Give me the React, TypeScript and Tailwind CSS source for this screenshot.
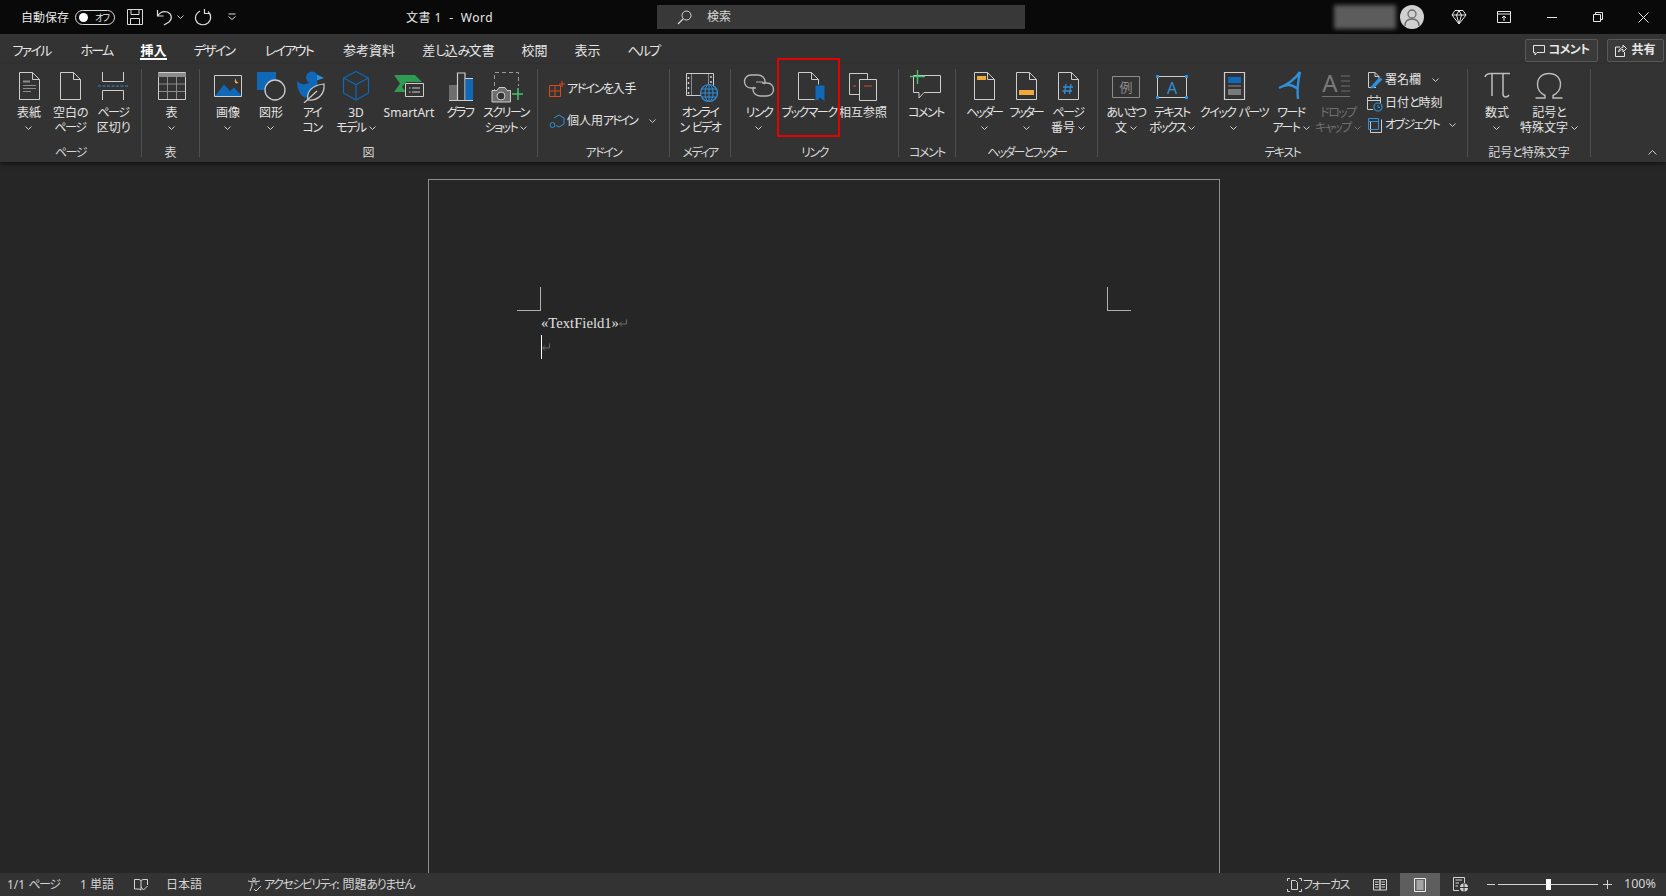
import type { ReactNode } from "react";

const S = "#cdcdcd";
const BLUE = "#0f68b8";
const LBLUE = "#2f8fd8";
const ORANGE = "#f2a93b";
const GREEN = "#46c46c";
const BG = "#333333";

// Meiryo UI のかなは細いので、かなの部分だけ字間を詰める
function Jp({ text, tight = "tracking-[-1.5px]" }: { text: string; tight?: string }) {
  const parts = text.split(/([\u3040-\u30ff]+)/);
  return (
    <>
      {parts.map((part, i) =>
        i % 2 === 1 ? (
          <span key={i} className={tight}>
            {part}
          </span>
        ) : (
          part
        ),
      )}
    </>
  );
}

function Ico({ children, w = 36, h = 34 }: { children: ReactNode; w?: number; h?: number }) {
  return (
    <svg width={w} height={h} viewBox={`0 0 ${w} ${h}`} fill="none" stroke={S} strokeWidth="1">
      {children}
    </svg>
  );
}

const docPath = "M8.5 3.5H21.5L28.5 10.5V30.5H8.5ZM21.5 3.5V10.5H28.5";

const icons: Record<string, ReactNode> = {
  cover: (
    <Ico>
      <path d={docPath} />
      <path d="M12 12.5H19" stroke="#8c8c8c" strokeWidth="2" />
      <path d="M12 16.5H25M12 19.5H25M12 22.5H20" stroke="#8c8c8c" />
    </Ico>
  ),
  blank: (
    <Ico>
      <path d={docPath} />
    </Ico>
  ),
  pagebreak: (
    <Ico>
      <path d="M7.5 3V12.5H28.5V3M7.5 31V21.5H28.5V31" />
      <path d="M3 17H33" stroke={LBLUE} strokeDasharray="3 1.5" />
    </Ico>
  ),
  table: (
    <Ico>
      <path d="M4.5 3.5H31.5V30.5H4.5Z" />
      <path d="M4 4H32V8H4Z" fill="#8c8c8c" stroke="none" />
      <path d="M13.5 8V30M22.5 8V30M5 15H31M5 22.5H31" stroke="#8c8c8c" />
    </Ico>
  ),
  picture: (
    <Ico>
      <path d="M4.5 6.5H31.5V27.5H4.5Z" />
      <path d="M5 27L14 15.5L20 22L24 18.5L31 26V27Z" fill={BLUE} stroke="none" />
      <path d="M26 9.5A3 3 0 0 0 26 14.5A3 3 0 0 0 28.5 13.5A3 3 0 0 1 26 9.5Z" fill={ORANGE} stroke="none" />
    </Ico>
  ),
  shapes: (
    <Ico>
      <path d="M4 3H23V21H4Z" fill={BLUE} stroke="none" />
      <circle cx="22" cy="21" r="10" fill={BG} stroke={S} strokeWidth="1.3" />
    </Ico>
  ),
  icons: (
    <Ico>
      <circle cx="18" cy="8.5" r="6" fill={BLUE} stroke="none" />
      <path d="M23 5.5L30 9L23 11.5Z" fill={LBLUE} stroke="none" />
      <path d="M3 12C7 15.5 11 16 14 14L23 12C25 18 22 20 18 21L12 29C6 27 3 20 3 12Z" fill={BLUE} stroke="none" />
      <path d="M14 31C12 23 18 16 30 15C31 24 25 32 14 31Z" fill={BG} stroke={S} strokeWidth="1.2" />
      <path d="M10 34L23 22" stroke={S} strokeWidth="1.2" />
    </Ico>
  ),
  model: (
    <Ico>
      <path d="M18 2.5L30.5 9V24L18 31L5.5 24V9ZM5.5 9L18 15.5L30.5 9M18 15.5V31" stroke={BLUE} strokeWidth="1.2" />
    </Ico>
  ),
  smartart: (
    <Ico>
      <path d="M3 6H24L31 13H15L11 18L15 23H14L3 23L9 14.5Z" fill="#2f9a52" stroke="none" />
      <path d="M14.5 14.5H32.5V27.5H14.5Z" fill={BG} />
      <path d="M18 19H19.5M21 19H29M18 23H19.5M21 23H29" />
    </Ico>
  ),
  chart: (
    <Ico>
      <path d="M7 16H15V32H7Z" fill="#6e6e6e" stroke="none" />
      <path d="M15.5 4H23V31.5H15.5Z" stroke={S} strokeWidth="1.2" />
      <path d="M23.5 9H31V32H23.5Z" fill={BLUE} stroke="none" />
      <path d="M23 9.5H31M7 31.5H31" stroke={S} />
    </Ico>
  ),
  screenshot: (
    <Ico>
      <path d="M6.5 24V3.5H30.5V17" strokeDasharray="4 3" stroke="#9c9c9c" />
      <path d="M4 21.5H9L11 18.5H17L19 21.5H22.5V33H4Z" fill="#6e6e6e" stroke={S} />
      <circle cx="13" cy="27" r="4" fill={BG} stroke={S} />
      <path d="M30 19V31M24 25H35" stroke={GREEN} strokeWidth="1.5" />
    </Ico>
  ),
  video: (
    <Ico>
      <path d="M4.5 4.5H31.5V26.5H4.5Z" />
      <path d="M9.5 5V26M26.5 5V15" stroke="#8c8c8c" />
      <path d="M6.5 8V10M6.5 13V15M6.5 18V20M6.5 23V25M29 7V9M29 12V14" stroke={S} strokeWidth="1.5" />
      <circle cx="27" cy="24" r="8.5" fill={BG} stroke={LBLUE} strokeWidth="1.2" />
      <path d="M18.5 24H35.5M19.5 20H34.5M19.5 28H34.5M27 15.5V32.5" stroke={LBLUE} />
      <ellipse cx="27" cy="24" rx="4" ry="8.5" stroke={LBLUE} />
    </Ico>
  ),
  link: (
    <Ico>
      <path d="M15 19H10C5.5 19 3.5 15.5 3.5 12.5C3.5 9 6 6 10 6H17C21 6 24 9 24 12.5C24 13.5 23.5 14.5 23 15" stroke="#b5b5b5" strokeWidth="1.4" />
      <path d="M21 14H26C30.5 14 32.5 17.5 32.5 20.5C32.5 24 30 27 26 27H19C15 27 12 24 12 20.5C12 19.5 12.5 18.5 13 18" stroke="#b5b5b5" strokeWidth="1.4" />
      <path d="M15 13H22" stroke="#b5b5b5" />
    </Ico>
  ),
  bookmark: (
    <Ico>
      <path d="M7.5 3.5H20.5L27.5 10.5V30.5H7.5ZM20.5 3.5V10.5H27.5" />
      <path d="M24 16H34V33L29 29L24 33Z" fill={BLUE} stroke={BG} />
    </Ico>
  ),
  crossref: (
    <Ico>
      <path d="M4.5 4.5H22.5V25.5H4.5Z" />
      <path d="M14.5 10.5H31.5V31.5H14.5Z" fill={BG} />
      <path d="M8 17H11M19 17H27" stroke="#e0453a" strokeWidth="1.2" />
    </Ico>
  ),
  comment: (
    <Ico>
      <path d="M5.5 6.5H32.5V23.5H16L11 29V23.5H5.5Z" />
      <path d="M9.5 1V15M2 7.5H17" stroke={GREEN} strokeWidth="1.4" />
    </Ico>
  ),
  header: (
    <Ico>
      <path d={docPath} />
      <path d="M11 7H20V11H11Z" fill={ORANGE} stroke="none" />
    </Ico>
  ),
  footer: (
    <Ico>
      <path d={docPath} />
      <path d="M11 21H26V26H11Z" fill={ORANGE} stroke="none" />
    </Ico>
  ),
  pagenum: (
    <Ico>
      <path d={docPath} />
      <path d="M16 15L14.5 25M21 15L19.5 25M13 18H23M12.5 22H22" stroke={LBLUE} strokeWidth="1.3" />
    </Ico>
  ),
  greeting: (
    <Ico>
      <path d="M4.5 7.5H31.5V28.5H4.5Z" stroke="#8c8c8c" />
      <text x="18" y="23" textAnchor="middle" fontSize="13" fill="#8c8c8c" stroke="none">
        例
      </text>
    </Ico>
  ),
  textbox: (
    <Ico>
      <path d="M3.5 7.5H32.5V28.5H3.5Z" />
      <path d="M2 6H5V9H2ZM31 6H34V9H31ZM2 27H5V30H2ZM31 27H34V30H31Z" fill={LBLUE} stroke="none" />
      <text x="18" y="24.5" textAnchor="middle" fontSize="16" fill={LBLUE} stroke="none">
        A
      </text>
    </Ico>
  ),
  parts: (
    <Ico>
      <path d="M8.5 3.5H28.5V30.5H8.5Z" strokeWidth="1.2" />
      <path d="M12 8H25V14H12Z" fill={BLUE} stroke="none" />
      <path d="M12 17H25" stroke="#8c8c8c" />
      <path d="M12 20H25V26H12Z" fill="#7a7a7a" stroke="none" />
    </Ico>
  ),
  wordart: (
    <Ico>
      <path d="M27 3C22 10 14 16 6 19M27 3C25 12 24 22 25 30M11 17C15 15 20 16 25 20" stroke={LBLUE} strokeWidth="2.4" />
    </Ico>
  ),
  dropcap: (
    <Ico>
      <text x="10" y="23" textAnchor="middle" fontSize="24" fill="#7a7a7a" stroke="none">
        A
      </text>
      <path d="M21 7H30M21 12H30M21 17H30M21 22H30M2 27.5H30" stroke="#6f6f6f" />
    </Ico>
  ),
  pi: (
    <Ico>
      <path d="M6 8C7 5 9 4.5 12 4.5H31" stroke="#bdbdbd" strokeWidth="1.5" />
      <path d="M13 5V27M24 5V25C24 27 25 28 27 28C28 28 29 27.5 30 26" stroke="#bdbdbd" strokeWidth="1.5" />
    </Ico>
  ),
  omega: (
    <Ico>
      <path
        d="M4.5 29H14V26.5C9 24 6.5 20.5 6.5 15.5C6.5 9 11 4.5 18 4.5C25 4.5 29.5 9 29.5 15.5C29.5 20.5 27 24 22 26.5V29H31.5"
        stroke="#bdbdbd"
        strokeWidth="1.4"
      />
    </Ico>
  ),
};

function Chevron({ color = "#cfcfcf" }: { color?: string }) {
  return (
    <svg width="7" height="4" viewBox="0 0 7 4" fill="none" stroke={color} className="shrink-0">
      <path d="M0.5 0.5L3.5 3.5L6.5 0.5" />
    </svg>
  );
}

type Btn = {
  w: string;
  icon: string;
  lines: string[];
  chevron?: "below" | "inline";
  dim?: boolean;
  tight?: string;
};

function RibbonButton({ btn }: { btn: Btn }) {
  const color = btn.dim ? "#707070" : "#e4e4e4";
  return (
    <div className={`${btn.w} flex shrink-0 flex-col items-center`}>
      <div className="flex h-[34px] w-full items-center justify-center">{icons[btn.icon]}</div>
      <div className="mt-[2px] flex flex-col items-center text-[12px] leading-[15px]" style={{ color }}>
        {btn.lines.map((line, i) => (
          <div key={line} className="flex items-center gap-[3px] whitespace-nowrap">
            <span>
              <Jp text={line} tight={btn.tight} />
            </span>
            {btn.chevron === "inline" && i === btn.lines.length - 1 && (
              <Chevron color={btn.dim ? "#707070" : "#cfcfcf"} />
            )}
          </div>
        ))}
        {btn.chevron === "below" && (
          <div className="flex h-[15px] items-center">
            <Chevron />
          </div>
        )}
      </div>
    </div>
  );
}

function Group({
  w,
  pad,
  title,
  tight,
  children,
}: {
  w: string;
  pad: string;
  title: string;
  tight?: string;
  children: ReactNode;
}) {
  return (
    <div className={`${w} flex h-[88px] shrink-0 flex-col border-r border-[#4f4f4f]`}>
      <div className={`${pad} flex flex-1 items-start`}>{children}</div>
      <div className="mb-[-3px] h-[14px] text-center text-[12px] leading-[14px] text-[#d8d8d8]">
        <Jp text={title} tight={tight} />
      </div>
    </div>
  );
}

const tabs = [
  { label: "ファイル", w: "w-[63px]" },
  { label: "ホーム", w: "w-[67px]" },
  { label: "挿入", w: "w-[47px]", active: true },
  { label: "デザイン", w: "w-[74px]" },
  { label: "レイアウト", w: "w-[76px]" },
  { label: "参考資料", w: "w-[84px]" },
  { label: "差し込み文書", w: "w-[95px]" },
  { label: "校閲", w: "w-[57px]" },
  { label: "表示", w: "w-[49px]" },
  { label: "ヘルプ", w: "w-[63px]" },
];

function TitleBar() {
  return (
    <header className="flex h-[34px] shrink-0 items-center bg-[#090909] text-[12px] text-[#e8e8e8]">
      <div className="flex w-[657px] shrink-0 items-center">
        <span className="ml-[21px] w-[54px] pt-[2px]">自動保存</span>
        <div className="flex h-[15px] w-[40px] items-center justify-between rounded-full border border-[#dcdcdc] pl-[3px] pr-[5px]">
          <span className="h-[9px] w-[9px] rounded-full bg-white" />
          <span className="text-[9px] leading-none tracking-[-1px]">オフ</span>
        </div>
        <svg width="18" height="18" viewBox="0 0 18 18" fill="none" stroke="#dcdcdc" className="ml-[11px]">
          <path d="M1.5 1.5H16.5V16.5H1.5ZM5 1.5V6.5H13V1.5M4.5 16.5V10.5H13.5V16.5" />
        </svg>
        <svg width="18" height="18" viewBox="0 0 18 18" fill="none" stroke="#dcdcdc" strokeWidth="1.2" className="ml-[12px]">
          <path d="M1.5 2V8H7.5M1.5 8C4 4 8 3 11.5 4C16 6 16.5 11 13 14L8 17" />
        </svg>
        <span className="ml-[3px]">
          <Chevron />
        </span>
        <svg width="19" height="18" viewBox="0 0 19 18" fill="none" stroke="#dcdcdc" strokeWidth="1.2" className="ml-[10px]">
          <path d="M10.5 1V5.5H15M6 3C2 5 0.5 9 2 12.5C4 17 10 18 14 15C18 11.5 17 6 14 3.5" />
        </svg>
        <svg width="8" height="8" viewBox="0 0 8 8" fill="none" stroke="#dcdcdc" className="ml-[15px]">
          <path d="M0.5 1H7.5M0.5 3.5L4 6.5L7.5 3.5" />
        </svg>
        <span className="ml-[170px] whitespace-nowrap pt-[2px] tracking-[0.5px]">文書 1&nbsp; -&nbsp; Word</span>
      </div>
      <div className="flex h-[24px] w-[368px] shrink-0 items-center bg-[#383838] pl-[20px] text-[#d8d8d8]">
        <svg width="15" height="15" viewBox="0 0 15 15" fill="none" stroke="#d8d8d8">
          <circle cx="9.5" cy="5.5" r="4.5" />
          <path d="M6 9L1 14" strokeWidth="1.3" />
        </svg>
        <span className="ml-[15px]">検索</span>
      </div>
      <div className="flex flex-1 items-center">
        <div className="ml-[309px] h-[24px] w-[62px] bg-[#5c5c5c] blur-[2px]" />
        <div className="ml-[4px] flex h-[24px] w-[24px] items-center justify-center rounded-full bg-[#d0d0d0]">
          <svg width="18" height="18" viewBox="0 0 18 18" fill="none" stroke="#6a6a6a" strokeWidth="1.3">
            <circle cx="9" cy="6" r="4" />
            <path d="M2 18C2 13 5 11 9 11C13 11 16 13 16 18" />
          </svg>
        </div>
        <svg width="16" height="16" viewBox="0 0 16 16" fill="none" stroke="#e8e8e8" className="ml-[27px]">
          <path d="M4 1.5H12L15 6L8 15L1 6ZM1 6H15M5.5 6L8 15L10.5 6M5.5 6L8 1.5L10.5 6" />
        </svg>
        <svg width="14" height="12" viewBox="0 0 14 12" fill="none" stroke="#e8e8e8" className="ml-[30px]">
          <path d="M0.5 0.5H13.5V11.5H0.5ZM1 3H13M7 10V5M5 7L7 5L9 7" />
        </svg>
        <div className="ml-[36px] h-[1px] w-[10px] bg-[#e8e8e8]" />
        <svg width="10" height="10" viewBox="0 0 10 10" fill="none" stroke="#e8e8e8" className="ml-[36px]">
          <path d="M0.5 2.5H7.5V9.5H0.5ZM2.5 2.5V0.5H9.5V7.5H7.5" />
        </svg>
        <svg width="11" height="11" viewBox="0 0 11 11" fill="none" stroke="#e8e8e8" className="ml-[35px]">
          <path d="M0.5 0.5L10.5 10.5M10.5 0.5L0.5 10.5" />
        </svg>
      </div>
    </header>
  );
}

function TabRow() {
  return (
    <nav className="flex h-[30px] shrink-0 items-center bg-[#333333] pt-[2px] text-[13px] text-[#e6e6e6]">
      {tabs.map((t) => (
        <div key={t.label} className={`${t.w} flex shrink-0 justify-center`}>
          <span
            className={`h-[20px] whitespace-nowrap leading-[20px] ${
              t.active ? "border-b-[2px] border-white font-bold text-white" : ""
            }`}
          >
            <Jp text={t.label} tight="tracking-[-1.7px]" />
          </span>
        </div>
      ))}
      <div className="ml-auto flex gap-[9px] pr-[2px]">
        <div className="flex h-[23px] w-[73px] items-center justify-center gap-[3px] rounded-[2px] border border-[#595959] bg-[#3a3a3a] text-[12px] font-bold">
          <svg width="12" height="12" viewBox="0 0 12 12" fill="none" stroke="#e6e6e6">
            <path d="M0.5 1.5H11.5V8.5H4L2 11V8.5H0.5Z" />
          </svg>
          <span className="tracking-[-0.6px]">コメント</span>
        </div>
        <div className="flex h-[23px] w-[57px] items-center justify-center gap-[4px] rounded-[2px] border border-[#595959] bg-[#3a3a3a] text-[12px] font-bold">
          <svg width="12" height="13" viewBox="0 0 12 13" fill="none" stroke="#e6e6e6">
            <path d="M5 3H0.5V12.5H9.5V8M3.5 8C4 5 6 3.5 8 3.5V1L11.5 4.5L8 8V5.5C6 5.5 4.5 6.5 3.5 8Z" />
          </svg>
          共有
        </div>
      </div>
    </nav>
  );
}

function Ribbon() {
  return (
    <section className="relative flex h-[98px] shrink-0 bg-[#333333] py-[5px] shadow-[0_2px_4px_rgba(0,0,0,0.5)]">
      <Group w="w-[142px]" pad="pl-[9px]" title="ページ">
        <RibbonButton btn={{ w: "w-[40px]", icon: "cover", lines: ["表紙"], chevron: "below" }} />
        <RibbonButton btn={{ w: "w-[42px]", icon: "blank", lines: ["空白の", "ページ"] }} />
        <RibbonButton btn={{ w: "w-[44px]", icon: "pagebreak", lines: ["ページ", "区切り"] }} />
      </Group>
      <Group w="w-[58px]" pad="pl-[1px]" title="表">
        <RibbonButton btn={{ w: "w-[57px]", icon: "table", lines: ["表"], chevron: "below" }} />
      </Group>
      <Group w="w-[338px]" pad="pl-[6px]" title="図">
        <RibbonButton btn={{ w: "w-[44px]", icon: "picture", lines: ["画像"], chevron: "below" }} />
        <RibbonButton btn={{ w: "w-[42px]", icon: "shapes", lines: ["図形"], chevron: "below" }} />
        <RibbonButton btn={{ w: "w-[40px]", icon: "icons", lines: ["アイ", "コン"] }} />
        <RibbonButton btn={{ w: "w-[48px]", icon: "model", lines: ["3D", "モデル"], chevron: "inline" }} />
        <RibbonButton btn={{ w: "w-[58px]", icon: "smartart", lines: ["SmartArt"] }} />
        <RibbonButton btn={{ w: "w-[44px]", icon: "chart", lines: ["グラフ"] }} />
        <RibbonButton btn={{ w: "w-[48px]", icon: "screenshot", lines: ["スクリーン", "ショット"], chevron: "inline" }} />
      </Group>
      <Group w="w-[132px]" pad="pl-[11px]" title="アドイン">
        <div className="flex flex-col gap-[14px] pt-[11px] text-[12px] leading-[18px] text-[#e4e4e4]">
          <div className="flex items-center gap-[2px]">
            <svg width="16" height="16" viewBox="0 0 16 16" fill="none" stroke="#d8481c">
              <path d="M0.5 4.5H11.5V15.5H0.5ZM6 4.5V15.5M0.5 10H11.5M13 0V6M10 3H16" />
            </svg>
            <span>
              <Jp text="アドインを入手" />
            </span>
          </div>
          <div className="flex items-center gap-[2px]">
            <svg width="16" height="16" viewBox="0 0 16 16" fill="none" stroke={LBLUE}>
              <path d="M5 5L10 2L15 5V11L10 14L7 12.5" />
              <circle cx="3.5" cy="12" r="2.5" />
            </svg>
            <span>
              <Jp text="個人用アドイン" tight="tracking-[-2px]" />
            </span>
            <span className="ml-[10px]">
              <Chevron />
            </span>
          </div>
        </div>
      </Group>
      <Group w="w-[61px]" pad="pl-0" title="メディア">
        <RibbonButton btn={{ w: "w-[60px]", icon: "video", lines: ["オンライ", "ン ビデオ"] }} />
      </Group>
      <Group w="w-[168px]" pad="pl-[6px]" title="リンク">
        <RibbonButton btn={{ w: "w-[44px]", icon: "link", lines: ["リンク"], chevron: "below" }} />
        <RibbonButton btn={{ w: "w-[56px]", icon: "bookmark", lines: ["ブックマーク"] }} />
        <RibbonButton btn={{ w: "w-[52px]", icon: "crossref", lines: ["相互参照"] }} />
      </Group>
      <Group w="w-[57px]" pad="pl-0" title="コメント">
        <RibbonButton btn={{ w: "w-[54px]", icon: "comment", lines: ["コメント"] }} />
      </Group>
      <Group w="w-[142px]" pad="pl-[7px]" title="ヘッダーとフッター" tight="tracking-[-2px]">
        <RibbonButton btn={{ w: "w-[42px]", icon: "header", lines: ["ヘッダー"], chevron: "below", tight: "tracking-[-2.2px]" }} />
        <RibbonButton btn={{ w: "w-[42px]", icon: "footer", lines: ["フッター"], chevron: "below", tight: "tracking-[-2.2px]" }} />
        <RibbonButton btn={{ w: "w-[42px]", icon: "pagenum", lines: ["ページ", "番号"], chevron: "inline" }} />
      </Group>
      <Group w="w-[370px]" pad="pl-[5px]" title="テキスト">
        <RibbonButton btn={{ w: "w-[46px]", icon: "greeting", lines: ["あいさつ", "文"], chevron: "inline" }} />
        <RibbonButton btn={{ w: "w-[46px]", icon: "textbox", lines: ["テキスト", "ボックス"], chevron: "inline" }} />
        <RibbonButton btn={{ w: "w-[78px]", icon: "parts", lines: ["クイック パーツ"], chevron: "below" }} />
        <RibbonButton btn={{ w: "w-[36px]", icon: "wordart", lines: ["ワード", "アート"], chevron: "inline" }} />
        <RibbonButton btn={{ w: "w-[58px]", icon: "dropcap", lines: ["ドロップ", "キャップ"], chevron: "inline", dim: true }} />
        <div className="flex flex-col text-[12px] leading-[22.5px] text-[#e4e4e4]">
          <div className="flex items-center gap-[2px]">
            <svg width="16" height="18" viewBox="0 0 16 18" fill="none" stroke={S}>
              <path d="M1.5 1.5H8L12 5.5V8M8 1.5V5.5H12M1.5 1.5V16.5H9" />
              <path d="M4 15.5L12.5 6L15.5 8.5L7 17L3.5 17.5Z" fill={LBLUE} stroke="none" />
            </svg>
            <span className="w-[45px]">署名欄</span>
            <Chevron />
          </div>
          <div className="flex items-center gap-[2px]">
            <svg width="16" height="18" viewBox="0 0 16 18" fill="none" stroke={S}>
              <path d="M0.5 3.5H13.5V9M0.5 3.5V15.5H6M0.5 6.5H13.5M4 1V5M10 1V5" />
              <circle cx="11" cy="13" r="4" stroke={LBLUE} strokeWidth="1.2" />
              <path d="M11 11V13.5H13" stroke={LBLUE} />
            </svg>
            <span>
              <Jp text="日付と時刻" tight="tracking-[-1px]" />
            </span>
          </div>
          <div className="flex items-center gap-[2px]">
            <svg width="16" height="18" viewBox="0 0 16 18" fill="none" stroke={S}>
              <path d="M3.5 5.5V16.5H14.5V3.5" />
              <path d="M1.5 2.5H11.5V13.5H1.5ZM2 5.5H11" stroke={LBLUE} />
            </svg>
            <span className="w-[62px] whitespace-nowrap">
              <Jp text="オブジェクト" />
            </span>
            <Chevron />
          </div>
        </div>
      </Group>
      <Group w="w-[123px]" pad="pl-[5px]" title="記号と特殊文字" tight="tracking-[-1px]">
        <RibbonButton btn={{ w: "w-[48px]", icon: "pi", lines: ["数式"], chevron: "below" }} />
        <RibbonButton btn={{ w: "w-[56px]", icon: "omega", lines: ["記号と", "特殊文字"], chevron: "inline", tight: "tracking-[-1px]" }} />
      </Group>
      <div className="flex flex-1 items-end justify-end pb-[2px] pr-[9px]">
        <svg width="9" height="5" viewBox="0 0 9 5" fill="none" stroke="#cfcfcf">
          <path d="M0.5 4.5L4.5 0.5L8.5 4.5" />
        </svg>
      </div>
    </section>
  );
}

function ReturnMark() {
  return (
    <svg width="8" height="8" viewBox="0 0 8 8" fill="none" stroke="#6a6a6a" className="shrink-0">
      <path d="M7.5 0.5V5H0.5M3 2.5L0.5 5L3 7.5" />
    </svg>
  );
}

function Page() {
  return (
    <main className="flex flex-1 justify-center overflow-hidden bg-[#262626] pt-[17px]">
      <div className="ml-[-18px] h-[800px] w-[792px] shrink-0 border border-b-0 border-[#8e8e8e] px-[88px] pt-[107px]">
        <div className="flex justify-between">
          <div className="h-[24px] w-[24px] border-b border-r border-[#b0b0b0]" />
          <div className="h-[24px] w-[24px] border-b border-l border-[#b0b0b0]" />
        </div>
        <div className="pl-[24px] font-['Liberation_Serif',serif] text-[14.67px] leading-[24px] text-[#e0e0e0]">
          <div className="flex items-center">
            «TextField1»
            <ReturnMark />
          </div>
          <div className="flex h-[24px] items-center">
            <div className="h-[24px] w-[1px] bg-white" />
            <ReturnMark />
          </div>
        </div>
      </div>
    </main>
  );
}

function StatusBar() {
  return (
    <footer className="flex h-[23px] shrink-0 items-center bg-[#333333] text-[12px] text-[#d4d4d4]">
      <span className="ml-[7px] w-[73px] whitespace-nowrap">
        <Jp text="1/1 ページ" />
      </span>
      <span className="w-[35px] whitespace-nowrap">1 単語</span>
      <svg width="14" height="13" viewBox="0 0 14 13" fill="none" stroke="#d4d4d4" className="ml-[19px]">
        <path d="M0.5 1.5H5L7 2.5V12L5 11H0.5ZM7 2.5L9 1.5H13.5V7M7 9L9.5 12L13.5 8" />
      </svg>
      <span className="ml-[18px]">日本語</span>
      <svg width="15" height="15" viewBox="0 0 15 15" fill="none" stroke="#d4d4d4" className="ml-[45px]">
        <circle cx="7" cy="2.5" r="1.5" />
        <path d="M1 4L7 5L13 4M5 5.5V9L3 14M9 5.5V8M7 12L9 14L14 9" />
      </svg>
      <span className="ml-[2px] whitespace-nowrap">
        <Jp text="アクセシビリティ: 問題ありません" tight="tracking-[-1.5px]" />
      </span>
      <div className="ml-auto flex h-full items-center">
        <svg width="15" height="14" viewBox="0 0 15 14" fill="none" stroke="#d4d4d4">
          <path d="M0.5 3V0.5H3M12 0.5H14.5V3M0.5 11V13.5H3M12 13.5H14.5V11M4.5 2.5H8.5L10.5 4.5V11.5H4.5Z" />
        </svg>
        <span className="ml-[1px] w-[70px] whitespace-nowrap">
          <Jp text="フォーカス" tight="tracking-[-1.4px]" />
        </span>
        <svg width="14" height="13" viewBox="0 0 14 13" fill="none" stroke="#d4d4d4">
          <path d="M0.5 1.5H7V12H0.5ZM7 1.5H13.5V12H7ZM2 4H5.5M2 6.5H5.5M2 9H5.5M8.5 4H12M8.5 6.5H12M8.5 9H12" />
        </svg>
        <div className="ml-[13px] flex h-full w-[40px] items-center justify-center bg-[#5e5e5e]">
          <svg width="12" height="14" viewBox="0 0 12 14" fill="none" stroke="#ececec">
            <path d="M0.5 0.5H11.5V13.5H0.5ZM2.5 3H9.5M2.5 5H9.5M2.5 7H9.5M2.5 9H9.5M2.5 11H9.5" />
          </svg>
        </div>
        <svg width="16" height="15" viewBox="0 0 16 15" fill="none" stroke="#d4d4d4" className="ml-[13px]">
          <path d="M0.5 0.5H11.5V6M0.5 0.5V13.5H6M2.5 3H9M2.5 6H6M2.5 9H5" />
          <circle cx="11" cy="10.5" r="4" fill="#d4d4d4" stroke="none" />
          <path d="M7 10.5H15M11 6.5V14.5" stroke="#333333" />
        </svg>
        <div className="ml-[18px] h-[1px] w-[8px] bg-[#d4d4d4]" />
        <div className="relative ml-[3px] flex w-[100px] items-center">
          <div className="h-[1px] w-full bg-[#d4d4d4]" />
          <div className="absolute left-[48px] h-[11px] w-[5px] bg-white" />
        </div>
        <svg width="9" height="9" viewBox="0 0 9 9" stroke="#d4d4d4" className="ml-[5px]">
          <path d="M0 4.5H9M4.5 0V9" />
        </svg>
        <span className="ml-[12px] mr-[9px] w-[33px] whitespace-nowrap text-[12.5px]">100%</span>
      </div>
    </footer>
  );
}

export default function App() {
  return (
    <div className="flex h-[896px] w-[1666px] flex-col overflow-hidden bg-[#262626] font-['Noto_Sans','Noto_Sans_CJK_JP',sans-serif] [font-feature-settings:'palt']">
      <TitleBar />
      <TabRow />
      <div className="relative">
        <Ribbon />
        {/* 説明用の赤枠 */}
        <div className="absolute left-[777px] top-[-6px] h-[79px] w-[63px] border-2 border-[#e60000]" />
      </div>
      <Page />
      <StatusBar />
    </div>
  );
}
